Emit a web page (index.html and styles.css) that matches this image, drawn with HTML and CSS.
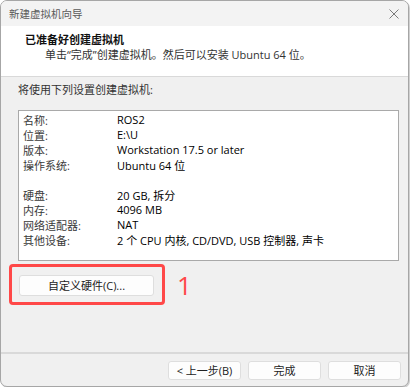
FILE: index.html
```html
<!DOCTYPE html>
<html lang="zh-CN">
<head>
    <meta charset="UTF-8">
    <meta name="viewport" content="width=device-width, initial-scale=1.0">
    <title>新建虚拟机向导</title>
    <link rel="stylesheet" href="styles.css">
</head>
<body>
    <div class="window">
        <div class="titlebar">
            <span class="title">新建虚拟机向导</span>
            <svg class="close" width="10" height="10" viewBox="0 0 10 10">
                <path d="M0.5 0.5 L9.5 9.5 M9.5 0.5 L0.5 9.5" stroke="#7a7a7a" stroke-width="1" fill="none"/>
            </svg>
        </div>

        <div class="header">
            <div class="heading">已准备好创建虚拟机</div>
            <div class="subheading">单击“完成”创建虚拟机。然后可以安装 Ubuntu 64 位。</div>
        </div>

        <div class="content">
            <p class="intro">将使用下列设置创建虚拟机:</p>

            <div class="summary">
                <span class="label">名称:</span><span class="value">ROS2</span>
                <span class="label">位置:</span><span class="value">E:\U</span>
                <span class="label">版本:</span><span class="value">Workstation 17.5 or later</span>
                <span class="label">操作系统:</span><span class="value">Ubuntu 64 位</span>
                <span class="spacer"></span>
                <span class="label">硬盘:</span><span class="value">20 GB, 拆分</span>
                <span class="label">内存:</span><span class="value">4096 MB</span>
                <span class="label">网络适配器:</span><span class="value">NAT</span>
                <span class="label">其他设备:</span><span class="value">2 个 CPU 内核, CD/DVD, USB 控制器, 声卡</span>
            </div>

            <div class="custom-row">
                <div class="highlight">
                    <button class="btn btn-custom">自定义硬件(C)...</button>
                </div>
                <span class="marker">1</span>
            </div>
        </div>

        <div class="footer">
            <button class="btn">&lt; 上一步(B)</button>
            <button class="btn">完成</button>
            <button class="btn">取消</button>
        </div>
    </div>
</body>
</html>
```

FILE: styles.css
```css
body {
    margin: 0;
    padding: 0;
    background: #ffffff;
    font-family: "Open Sans", "Noto Sans CJK SC", sans-serif;
    font-size: 11px;
    color: #1a1a1a;
}

.window {
    box-sizing: border-box;
    width: 409px;
    height: 387px;
    border: 1px solid #a6a6a6;
    border-radius: 7px;
    box-shadow: 1px 1px 0 #d0d0d0;
    background: #f0f0f0;
    overflow: hidden;
    display: flex;
    flex-direction: column;
}

.titlebar {
    height: 25px;
    background: #f3f3f3;
    display: flex;
    align-items: center;
    justify-content: space-between;
    padding: 0 9px 0 8px;
}

.title {
    color: #5a5a5a;
    font-size: 10.5px;
}

.header {
    height: 50px;
    background: #ffffff;
    border-bottom: 1px solid #d9d9d9;
    box-sizing: content-box;
    padding-left: 24px;
}

.heading {
    margin-top: 6px;
    line-height: 15px;
    font-weight: bold;
    color: #111;
}

.subheading {
    line-height: 15px;
    padding-left: 20px;
    color: #333;
}

.content {
    flex: 1;
    padding: 5px 9px 0 17px;
}

.intro {
    margin: 0;
    line-height: 15px;
    color: #333;
}

.summary {
    margin-top: 13px;
    height: 151px;
    box-sizing: border-box;
    background: #ffffff;
    border: 1px solid #a9a9a9;
    padding: 1px 4px 0;
    display: grid;
    grid-template-columns: 94px 1fr;
    grid-auto-rows: 15px;
    align-items: center;
    align-content: start;
}

.label {
    color: #3a3a3a;
}

.value {
    color: #000;
}

.spacer {
    grid-column: 1 / 3;
}

.custom-row {
    margin: 3px 0 0 -9px;
    display: flex;
    align-items: center;
}

.highlight {
    width: 156px;
    box-sizing: border-box;
    border: 3px solid #ff4848;
    border-radius: 4px;
    padding: 8px 8px 6px 7px;
}

.marker {
    margin-left: 12px;
    margin-top: 1px;
    color: #ff4848;
    font-family: "Open Sans", sans-serif;
    font-size: 26px;
    font-weight: 400;
    line-height: 1;
}

.btn {
    font-family: "Open Sans", "Noto Sans CJK SC", sans-serif;
    font-size: 11px;
    color: #222;
    background: #fdfdfd;
    border: 1px solid #dedede;
    border-radius: 3px;
    padding: 0;
    height: 19px;
    width: 73px;
    line-height: 17px;
}

.btn-custom {
    width: 135px;
    height: 21px;
    line-height: 19px;
}

.footer {
    border-top: 2px solid #d9d9d9;
    padding: 7px 7px 6px 0;
    display: flex;
    justify-content: flex-end;
    gap: 7px;
}
```
